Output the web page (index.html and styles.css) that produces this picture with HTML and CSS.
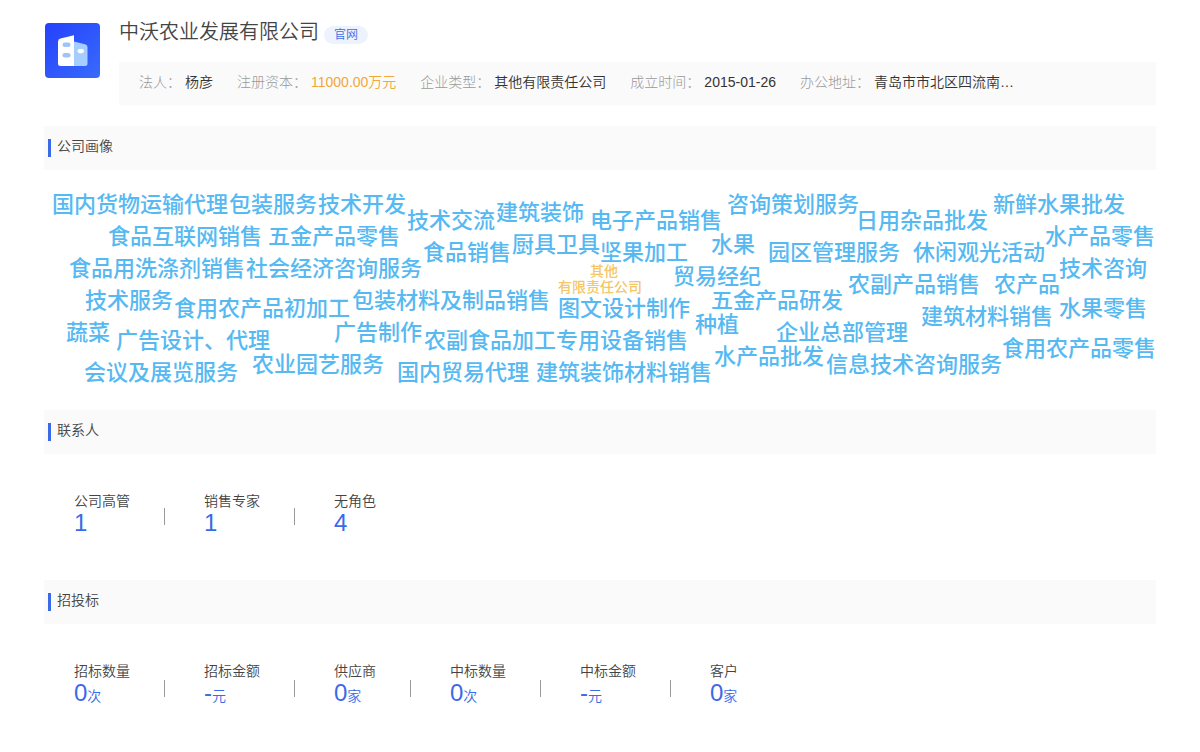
FILE: index.html
```html
<!DOCTYPE html>
<html lang="zh-CN">
<head>
<meta charset="utf-8">
<meta name="viewport" content="width=device-width, initial-scale=1">
<title>中沃农业发展有限公司</title>
<link rel="stylesheet" href="styles.css">
</head>
<body>
<main class="page">
  <header class="company">
    <svg class="company-logo" viewBox="0 0 55 55" aria-hidden="true">
      <defs>
        <linearGradient id="logo-bg" x1="0" y1="0" x2="1" y2="1">
          <stop offset="0" stop-color="#2541fb"/>
          <stop offset="1" stop-color="#386bfd"/>
        </linearGradient>
      </defs>
      <rect width="55" height="55" rx="4" fill="url(#logo-bg)"/>
      <path d="M29 18.500L40 21.200Q42.500 22 42.500 24V40.500Q42.500 43 40 43H29Z" fill="#a5cdfd"/>
      <path d="M29 12.200V43H15.500Q13 43 13 40.500V18.500Q13 16.200 15.500 15.500Z" fill="#fff"/>
      <rect x="17.500" y="19.500" width="8" height="4.500" rx="2.200" fill="#9fc3f8"/>
      <rect x="17.500" y="30" width="8" height="4.500" rx="2.200" fill="#9fc3f8"/>
      <rect x="32.500" y="26" width="6.500" height="4.200" rx="2.100" fill="#fff"/>
    </svg>
    <div class="company-body">
      <div class="company-title">
        <h1 class="company-name">中沃农业发展有限公司</h1>
        <a class="tag" href="#">官网</a>
      </div>
      <dl class="facts">
        <div class="fact"><dt>法人：</dt><dd>杨彦</dd></div>
        <div class="fact"><dt>注册资本：</dt><dd class="money">11000.00万元</dd></div>
        <div class="fact"><dt>企业类型：</dt><dd>其他有限责任公司</dd></div>
        <div class="fact"><dt>成立时间：</dt><dd>2015-01-26</dd></div>
        <div class="fact"><dt>办公地址：</dt><dd>青岛市市北区四流南…</dd></div>
      </dl>
    </div>
  </header>

  <section>
    <h2 class="section-title">公司画像</h2>
    <svg class="cloud" viewBox="44 170 1112 240" role="img" aria-label="公司画像">
      <g class="words">
        <text x="140" y="212">国内货物运输代理</text>
        <text x="273" y="212">包装服务</text>
        <text x="362" y="212">技术开发</text>
        <text x="451" y="228">技术交流</text>
        <text x="540" y="220">建筑装饰</text>
        <text x="656" y="228">电子产品销售</text>
        <text x="793" y="212">咨询策划服务</text>
        <text x="922" y="228">日用杂品批发</text>
        <text x="1059" y="212">新鲜水果批发</text>
        <text x="185" y="244">食品互联网销售</text>
        <text x="334" y="244">五金产品零售</text>
        <text x="467" y="260">食品销售</text>
        <text x="556" y="252">厨具卫具</text>
        <text x="644" y="260">坚果加工</text>
        <text x="733" y="252">水果</text>
        <text x="834" y="260">园区管理服务</text>
        <text x="979" y="260">休闲观光活动</text>
        <text x="1100" y="244">水产品零售</text>
        <text x="157" y="276">食品用洗涤剂销售</text>
        <text x="334" y="276">社会经济咨询服务</text>
        <text x="717" y="284">贸易经纪</text>
        <text x="914" y="292">农副产品销售</text>
        <text x="1027" y="292">农产品</text>
        <text x="1103" y="276">技术咨询</text>
        <text x="129" y="308">技术服务</text>
        <text x="262" y="316">食用农产品初加工</text>
        <text x="451" y="308">包装材料及制品销售</text>
        <text x="624" y="316">图文设计制作</text>
        <text x="777" y="308">五金产品研发</text>
        <text x="987" y="324">建筑材料销售</text>
        <text x="1103" y="316">水果零售</text>
        <text x="88" y="340">蔬菜</text>
        <text x="193" y="348">广告设计、代理</text>
        <text x="378" y="340">广告制作</text>
        <text x="556" y="348">农副食品加工专用设备销售</text>
        <text x="717" y="332">种植</text>
        <text x="842" y="340">企业总部管理</text>
        <text x="1079" y="356">食用农产品零售</text>
        <text x="161" y="380">会议及展览服务</text>
        <text x="318" y="372">农业园艺服务</text>
        <text x="463" y="380">国内贸易代理</text>
        <text x="624" y="380">建筑装饰材料销售</text>
        <text x="769" y="364">水产品批发</text>
        <text x="914" y="372">信息技术咨询服务</text>
      </g>
      <g class="core">
        <text x="604" y="276">其他</text>
        <text x="600" y="292">有限责任公司</text>
      </g>
    </svg>
  </section>

  <section>
    <h2 class="section-title">联系人</h2>
    <dl class="stats">
      <div class="stat"><dt>公司高管</dt><dd>1</dd></div>
      <div class="stat"><dt>销售专家</dt><dd>1</dd></div>
      <div class="stat"><dt>无角色</dt><dd>4</dd></div>
    </dl>
  </section>

  <section>
    <h2 class="section-title">招投标</h2>
    <dl class="stats">
      <div class="stat"><dt>招标数量</dt><dd>0<small>次</small></dd></div>
      <div class="stat"><dt>招标金额</dt><dd>-<small>元</small></dd></div>
      <div class="stat"><dt>供应商</dt><dd>0<small>家</small></dd></div>
      <div class="stat"><dt>中标数量</dt><dd>0<small>次</small></dd></div>
      <div class="stat"><dt>中标金额</dt><dd>-<small>元</small></dd></div>
      <div class="stat"><dt>客户</dt><dd>0<small>家</small></dd></div>
    </dl>
  </section>
</main>
</body>
</html>
```
FILE: styles.css
```css
* {
  box-sizing: border-box;
}

body {
  margin: 0;
  background: #fff;
  color: #444;
  font: 350 14px/20px "Liberation Sans", "Noto Sans CJK SC", sans-serif;
}

h1, h2, dl, dd {
  margin: 0;
  font-weight: inherit;
}

.page {
  padding: 18px 44px 0;
}

.company {
  display: flex;
  gap: 19px;
  margin-bottom: 21px;
}

.company-logo {
  flex: none;
  width: 56px;
  height: 56px;
  margin-top: 4px;
  padding: 1px 0 0 1px;
}

.company-body {
  flex: 1;
  min-width: 0;
}

.company-title {
  display: flex;
  align-items: flex-start;
  gap: 5px;
  height: 44px;
}

.company-name {
  font-size: 20px;
  line-height: 28px;
}

.tag {
  margin-top: 8px;
  padding: 0 10px;
  border-radius: 9px;
  background: #edf3fc;
  color: #3a6ee8;
  font-size: 12px;
  line-height: 18px;
  text-decoration: none;
}

.facts {
  display: flex;
  flex-wrap: wrap;
  column-gap: 24px;
  padding: 10px 20px 13px;
  background: #fafafa;
}

.fact {
  display: flex;
  gap: 4px;
}

.fact dt {
  color: #999;
  font-weight: 300;
}

.fact dd {
  color: #333;
}

.fact .money {
  color: #f0a838;
}

.section-title {
  display: flex;
  align-items: center;
  gap: 6px;
  height: 44px;
  padding: 0 4px 4px;
  background: #fafafa;
  font-size: 14px;
}

.section-title::before {
  content: "";
  width: 3px;
  height: 18px;
  margin-top: 4px;
  background: #3a6ae8;
}

.cloud {
  display: block;
  width: 100%;
  overflow: visible;
  text-anchor: middle;
  font-weight: 500;
}

.words {
  fill: #56b9f2;
  font-size: 22px;
}

.core {
  fill: #f4c665;
  font-size: 14px;
}

.stats {
  display: flex;
  flex-wrap: wrap;
  padding: 37px 30px 45px;
}

.stat {
  display: grid;
  grid-template-columns: auto auto;
  column-gap: 34px;
  margin-right: 39px;
}

.stat dt,
.stat dd {
  grid-column: 1;
}

.stat dd {
  color: #3a6ae8;
  font-size: 24px;
  line-height: 24px;
}

.stat small {
  font-size: 14px;
}

.stat:not(:last-child)::after {
  content: "";
  grid-area: 1 / 2 / 3 / 3;
  align-self: center;
  width: 1px;
  height: 17px;
  margin-top: 7px;
  background: #999;
}
```
